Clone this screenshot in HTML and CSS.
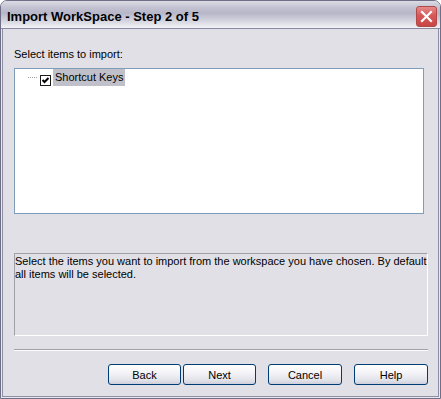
FILE: index.html
```html
<!DOCTYPE html>
<html lang="en">
<head>
    <meta charset="UTF-8">
    <title>Import WorkSpace - Step 2 of 5</title>
    <link rel="stylesheet" href="styles.css">
</head>
<body>
    <div class="window">
        <div class="titlebar">
            <span class="title">Import WorkSpace - Step 2 of 5</span>
            <span class="close-button">
                <svg width="21" height="21" viewBox="0 0 21 21">
                    <path d="M6 6 L15 15 M15 6 L6 15" stroke="#fff" stroke-width="2.2" stroke-linecap="square"/>
                </svg>
            </span>
        </div>

        <div class="content">
            <div class="label">Select items to import:</div>

            <div class="tree">
                <div class="tree-item">
                    <span class="tree-line"></span>
                    <span class="checkbox">
                        <svg width="11" height="11" viewBox="0 0 11 11">
                            <rect x="0.5" y="0.5" width="10" height="10" fill="#fff" stroke="#1c1c1c"/>
                            <path d="M2.5 5 L4.5 7 L8.5 3" fill="none" stroke="#000" stroke-width="2"/>
                        </svg>
                    </span>
                    <span class="tree-label">Shortcut Keys</span>
                </div>
            </div>

            <div class="description">
                Select the items you want to import from the workspace you have chosen. By default<br>
                all items will be selected.
            </div>

            <div class="separator"></div>

            <div class="buttons">
                <button class="btn btn-back">Back</button>
                <button class="btn btn-next">Next</button>
                <button class="btn btn-cancel">Cancel</button>
                <button class="btn btn-help">Help</button>
            </div>
        </div>
    </div>
</body>
</html>
```

FILE: styles.css
```css
body {
    margin: 0;
    font-family: 'Liberation Sans', Arial, sans-serif;
    font-size: 11px;
    color: #000;
    background: #fff;
}

.window {
    width: 441px;
    height: 399px;
    box-sizing: border-box;
    border: 1px solid #6e6e86;
    border-radius: 7px 7px 0 0;
    background: #e8e8f0;
    display: flex;
    flex-direction: column;
    overflow: hidden;
}

.titlebar {
    height: 27px;
    flex: none;
    display: flex;
    align-items: center;
    padding: 0 3px 0 6px;
    background: linear-gradient(#dcdce6 0%, #c2c2d2 25%, #b6b6c8 45%, #d6d6e0 75%, #f2f2f6 100%);
    border-bottom: 1px solid #8a8aa2;
}

.title {
    font-size: 13px;
    font-weight: bold;
    color: #000;
    padding-top: 3px;
}

.close-button {
    margin-left: auto;
    width: 21px;
    height: 21px;
    box-sizing: border-box;
    border: 1px solid #b04848;
    border-radius: 3px;
    background: linear-gradient(#e68a8a 0%, #d65858 45%, #c84646 100%);
    display: flex;
    align-items: center;
    justify-content: center;
    margin-top: 3px;
}

.close-button svg {
    display: block;
    margin: -1px;
}

.content {
    flex: 1;
    margin: 0 1px 1px;
    border: 1px solid #8e8ea4;
    border-top: none;
    background: #e1e0e6;
    padding: 19px 10px 0 11px;
    display: flex;
    flex-direction: column;
}

.label {
    line-height: 13px;
    height: 13px;
}

.tree {
    margin-top: 7px;
    margin-right: 4px;
    height: 146px;
    box-sizing: border-box;
    border: 1px solid #7f9db9;
    background: #fff;
    padding-left: 13px;
}

.tree-item {
    display: flex;
    align-items: center;
    height: 17px;
}

.tree-line {
    width: 10px;
    height: 1px;
    margin-top: 0;
    background: repeating-linear-gradient(90deg, #a0a0a0 0 1px, transparent 1px 2px);
}

.checkbox {
    margin-left: 2px;
    margin-top: 5px;
    width: 11px;
    height: 11px;
}

.checkbox svg {
    display: block;
}

.tree-label {
    margin-left: 2px;
    height: 17px;
    line-height: 17px;
    padding: 0 2px 0 2px;
    background: #c0c0ca;
}

.description {
    margin-top: 39px;
    height: 83px;
    box-sizing: border-box;
    border: 1px solid #a0a0a8;
    border-right-color: #fff;
    border-bottom-color: #fff;
    padding: 1px 0 0 0;
    line-height: 13px;
    white-space: nowrap;
    overflow: hidden;
}

.separator {
    margin-top: 13px;
    height: 1px;
    background: #a0a0a8;
    border-bottom: 1px solid #fff;
}

.buttons {
    margin-top: 13px;
    display: flex;
    justify-content: flex-end;
}

.btn {
    height: 21px;
    box-sizing: border-box;
    border: 1px solid #003c74;
    border-radius: 3px;
    background: linear-gradient(#ffffff 0%, #f4f4f8 40%, #e2e2ea 80%, #cfcfdc 100%);
    font-family: 'Liberation Sans', Arial, sans-serif;
    font-size: 11px;
    color: #000;
    padding: 0;
}

.btn-back {
    width: 73px;
}

.btn-next {
    width: 73px;
    margin-left: 2px;
}

.btn-cancel {
    width: 74px;
    margin-left: 12px;
}

.btn-help {
    width: 74px;
    margin-left: 12px;
}
```
